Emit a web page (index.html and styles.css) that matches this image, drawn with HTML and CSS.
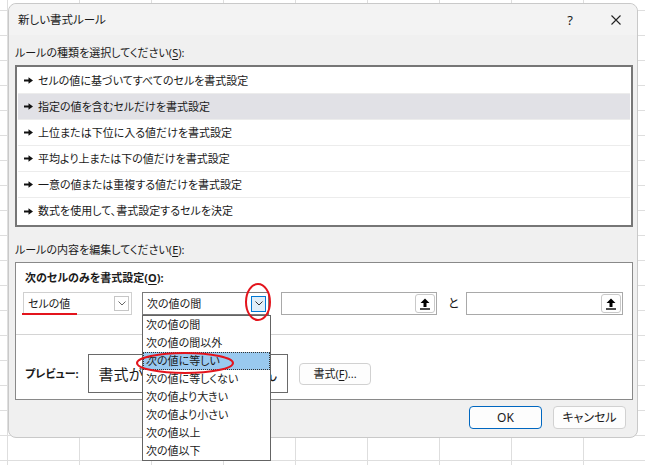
FILE: index.html
```html
<!DOCTYPE html>
<html lang="ja">
<head>
  <meta charset="UTF-8">
  <title>新しい書式ルール</title>
  <link rel="stylesheet" href="styles.css">
</head>
<body>
<div class="dialog">
  <div class="titlebar">
    <span class="title">新しい書式ルール</span>
    <span class="help">?</span>
    <span class="close"><svg width="10" height="10" viewBox="0 0 10 10"><path d="M0.5 0.5l9 9M9.5 0.5l-9 9" stroke="#222" stroke-width="1.1" fill="none"/></svg></span>
  </div>

  <div class="content">
    <div class="label">ルールの種類を選択してください(<u>S</u>):</div>
    <ul class="rules">
      <li><svg class="bullet" width="9" height="7" viewBox="0 0 9 7"><path d="M0 2.4h4.5V0.3L9 3.5 4.5 6.7V4.6H0z"/></svg>セルの値に基づいてすべてのセルを書式設定</li>
      <li class="selected"><svg class="bullet" width="9" height="7" viewBox="0 0 9 7"><path d="M0 2.4h4.5V0.3L9 3.5 4.5 6.7V4.6H0z"/></svg>指定の値を含むセルだけを書式設定</li>
      <li><svg class="bullet" width="9" height="7" viewBox="0 0 9 7"><path d="M0 2.4h4.5V0.3L9 3.5 4.5 6.7V4.6H0z"/></svg>上位または下位に入る値だけを書式設定</li>
      <li><svg class="bullet" width="9" height="7" viewBox="0 0 9 7"><path d="M0 2.4h4.5V0.3L9 3.5 4.5 6.7V4.6H0z"/></svg>平均より上または下の値だけを書式設定</li>
      <li><svg class="bullet" width="9" height="7" viewBox="0 0 9 7"><path d="M0 2.4h4.5V0.3L9 3.5 4.5 6.7V4.6H0z"/></svg>一意の値または重複する値だけを書式設定</li>
      <li><svg class="bullet" width="9" height="7" viewBox="0 0 9 7"><path d="M0 2.4h4.5V0.3L9 3.5 4.5 6.7V4.6H0z"/></svg>数式を使用して、書式設定するセルを決定</li>
    </ul>

    <div class="label label-edit">ルールの内容を編集してください(<u>E</u>):</div>
    <div class="editor">
      <div class="editor-title">次のセルのみを書式設定(<u>O</u>):</div>
      <div class="criteria">
        <div class="combo combo-field">
          <span class="value">セルの値</span>
          <span class="combo-btn"><svg width="8" height="5" viewBox="0 0 8 5"><path d="M0.5 0.5l3.5 3.5 3.5-3.5" fill="none" stroke="#666"/></svg></span>
        </div>
        <div class="combo combo-op">
          <span class="value">次の値の間</span>
          <span class="combo-btn"><svg width="8" height="5" viewBox="0 0 8 5"><path d="M0.5 0.5l3.5 3.5 3.5-3.5" fill="none" stroke="#333"/></svg></span>
          <ul class="dropdown">
            <li>次の値の間</li>
            <li>次の値の間以外</li>
            <li class="selected">次の値に等しい</li>
            <li>次の値に等しくない</li>
            <li>次の値より大きい</li>
            <li>次の値より小さい</li>
            <li>次の値以上</li>
            <li>次の値以下</li>
          </ul>
        </div>
        <div class="ref-input">
          <span class="ref-btn"><svg width="10" height="12" viewBox="0 0 10 12"><path d="M5 0.5L9.5 5H6.5V9H3.5V5H0.5Z"/><rect x="0" y="10.3" width="10" height="1.4"/></svg></span>
        </div>
        <span class="and">と</span>
        <div class="ref-input ref-input-2">
          <span class="ref-btn"><svg width="10" height="12" viewBox="0 0 10 12"><path d="M5 0.5L9.5 5H6.5V9H3.5V5H0.5Z"/><rect x="0" y="10.3" width="10" height="1.4"/></svg></span>
        </div>
      </div>
      <div class="preview-row">
        <span class="preview-label">プレビュー:</span>
        <div class="preview-box">書式が設定されていません</div>
        <button class="btn btn-format">書式(<u>F</u>)...</button>
      </div>
    </div>

    <div class="actions">
      <button class="btn btn-primary">OK</button>
      <button class="btn">キャンセル</button>
    </div>
  </div>
</div>

<!-- red annotation marks drawn over the screenshot -->
<svg class="marks" width="645" height="465" viewBox="0 0 645 465">
  <line x1="22" y1="314" x2="77" y2="314" stroke="#e3141c" stroke-width="2"/>
  <ellipse cx="258" cy="302" rx="12" ry="18" fill="none" stroke="#e3141c" stroke-width="2"/>
  <ellipse cx="185" cy="363" rx="48" ry="10" fill="none" stroke="#e3141c" stroke-width="2"/>
</svg>
</body>
</html>
```

FILE: styles.css
```css
*{box-sizing:border-box;}
body{
  margin:0;padding:3px 0 0 8px;width:645px;height:465px;overflow:hidden;position:relative;
  font:11px/16px "Noto Sans","Noto Sans CJK JP",sans-serif;font-feature-settings:"palt";color:#1a1a1a;
  background-color:#fff;
  background-image:linear-gradient(#dedede 1px,transparent 1px),linear-gradient(90deg,#dedede 1px,transparent 1px);
  background-size:72px 25px;background-position:7px 10px;
}
u{text-decoration-thickness:1px;text-underline-offset:2px;}

.dialog{width:630px;height:435px;background:#f0f0f0;border:1px solid #c9c9c9;border-radius:8px;display:flex;flex-direction:column;}
.titlebar{height:31px;display:flex;align-items:center;padding-left:9px;background:#f3f3f3;border-radius:8px 8px 0 0;}
.title{flex:1;font-size:11.5px;}
.help{width:10px;text-align:center;font-size:13px;margin-right:36px;}
.close{display:flex;margin-right:16px;}

.content{flex:1;display:flex;flex-direction:column;padding:0 4px 0 6px;}
.label{padding-top:10px;margin-bottom:4px;}
.label-edit{padding-top:15px;}

.rules{list-style:none;margin:0;padding:1px;border:2px solid #767676;background:#fff;}
.rules li{height:26px;display:flex;align-items:center;gap:5px;padding-left:6px;border-bottom:1px solid #ececec;}
.rules li:last-child{border-bottom:none;}
.rules li.selected{background:#e1e1e6;}
.bullet{fill:#111;}

.editor{border:1px solid #898989;background:#fff;}
.editor-title{font-weight:bold;padding:7px 0 0 9px;}
.criteria{display:flex;align-items:center;padding:6px 0 19px 7px;border-bottom:1px solid #d4d4d4;}

.combo{height:23px;display:flex;align-items:center;border:1px solid #d0d0d0;padding-left:4px;position:relative;}
.combo .value{flex:1;}
.combo-field{width:109px;}
.combo-op{width:127px;margin-left:10px;border-color:#7a7a7a;}
.combo-btn{width:15px;height:15px;display:flex;align-items:center;justify-content:center;border:1px solid #c6c6c6;background:#fff;margin-right:2px;}
.combo-op .combo-btn{height:16px;border-color:#0078d4;background:#e0eef9;}

.dropdown{position:absolute;top:22px;left:-1px;width:129px;margin:0;padding:0;list-style:none;border:1px solid #646464;background:#fff;z-index:2;}
.dropdown li{height:18px;line-height:18px;padding-left:3px;}
.dropdown li.selected{background:#99c9ef;outline:1px dotted #333;outline-offset:-1px;}

.ref-input{width:156px;height:23px;display:flex;align-items:center;justify-content:flex-end;padding-right:1px;border:1px solid #a9a9a9;margin-left:12px;}
.ref-input-2{width:157px;margin-left:0;}
.ref-btn{width:20px;height:19px;display:flex;align-items:center;justify-content:center;border:1px solid #c9c9c9;border-radius:3px;background:#fff;}
.and{margin:0 7px 0 11px;font-size:12px;}

.preview-row{display:flex;align-items:center;padding:19px 0 6px 9px;}
.preview-label{width:63px;font-weight:bold;}
.preview-box{width:200px;height:39px;display:flex;align-items:center;justify-content:center;border:1px solid #6a6a6a;font-size:15px;font-feature-settings:normal;}

.btn{font:inherit;color:inherit;background:#fdfdfd;border:1px solid #d1d1d1;border-radius:4px;padding:0;}
.btn-format{width:72px;height:22px;margin-left:11px;}
.actions{display:flex;justify-content:flex-end;gap:11px;padding:6px 7px 0 0;}
.actions .btn{width:73px;height:23px;font-size:12px;}
.btn-primary{border-color:#0067c0;}

.marks{position:absolute;left:0;top:0;pointer-events:none;z-index:3;}
```
